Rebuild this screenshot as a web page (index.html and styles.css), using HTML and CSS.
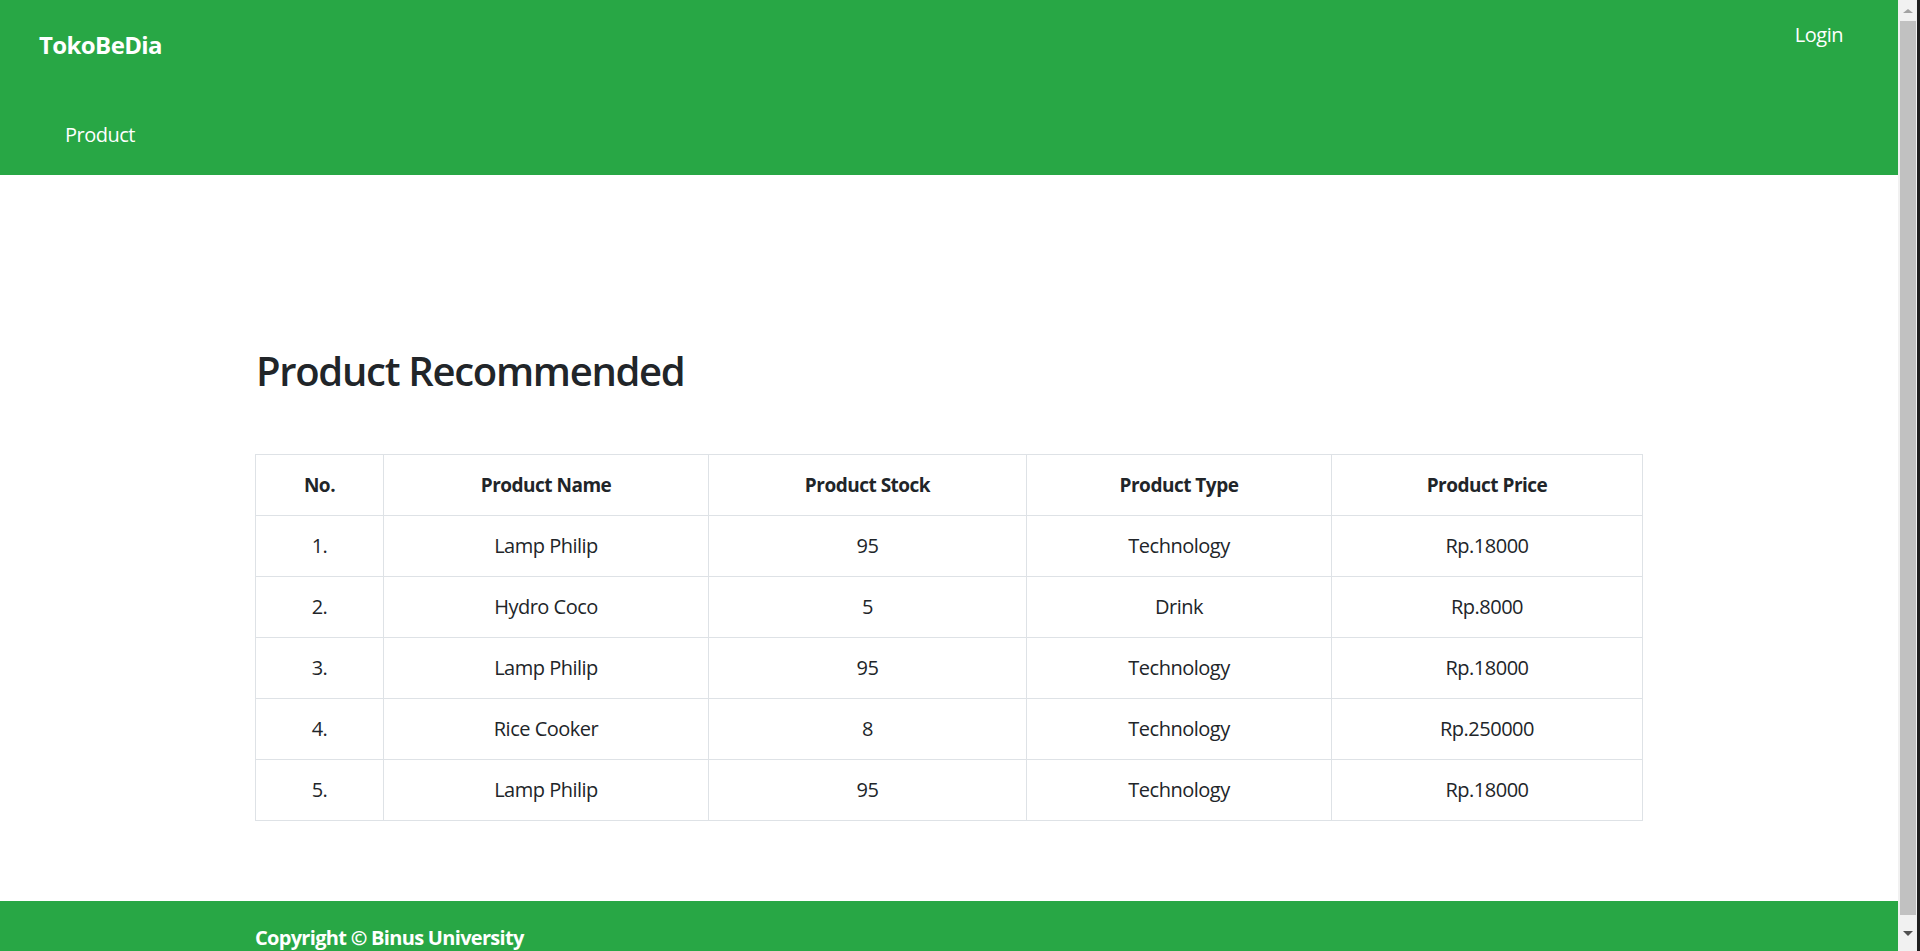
FILE: index.html
```html
<!DOCTYPE html>
<html lang="en">
<head>
<meta charset="utf-8">
<title>TokoBeDia</title>
<link rel="stylesheet" href="styles.css">
</head>
<body>
<div class="window">
  <div class="page">
    <header class="site-header">
      <div class="topbar">
        <a class="brand" href="#">TokoBeDia</a>
        <a class="login" href="#">Login</a>
      </div>
      <nav class="nav">
        <a class="nav-link" href="#">Product</a>
      </nav>
    </header>
    <main class="main">
      <div class="container">
        <h1 class="title">Product Recommended</h1>
        <table class="products">
          <colgroup>
            <col class="c-no"><col class="c-name"><col class="c-stock"><col class="c-type"><col class="c-price">
          </colgroup>
          <thead>
            <tr><th>No.</th><th>Product Name</th><th>Product Stock</th><th>Product Type</th><th>Product Price</th></tr>
          </thead>
          <tbody>
            <tr><td>1.</td><td>Lamp Philip</td><td>95</td><td>Technology</td><td>Rp.18000</td></tr>
            <tr><td>2.</td><td>Hydro Coco</td><td>5</td><td>Drink</td><td>Rp.8000</td></tr>
            <tr><td>3.</td><td>Lamp Philip</td><td>95</td><td>Technology</td><td>Rp.18000</td></tr>
            <tr><td>4.</td><td>Rice Cooker</td><td>8</td><td>Technology</td><td>Rp.250000</td></tr>
            <tr><td>5.</td><td>Lamp Philip</td><td>95</td><td>Technology</td><td>Rp.18000</td></tr>
          </tbody>
        </table>
      </div>
    </main>
    <footer class="site-footer">
      <div class="container">
        <p class="copyright">Copyright © Binus University</p>
      </div>
    </footer>
  </div>
  <div class="scrollbar" aria-hidden="true">
    <div class="sb-arrow sb-up"></div>
    <div class="sb-thumb"></div>
    <div class="sb-arrow sb-down"></div>
  </div>
</div>
</body>
</html>
```
FILE: styles.css
```css
* { box-sizing: border-box; }
html, body { margin: 0; padding: 0; }
body {
  font-family: "Open Sans", "Noto Sans", sans-serif;
  color: #212529;
  background: #fff;
  overflow: hidden;
}
a { text-decoration: none; color: #fff; }

.window {
  display: flex;
  height: 951px;
  overflow: hidden;
}
.page {
  flex: 1;
  min-width: 0;
  display: flex;
  flex-direction: column;
}

.site-header {
  background: #28a745;
  height: 175px;
  flex: none;
}
.topbar {
  display: flex;
  justify-content: space-between;
  align-items: flex-start;
  padding: 20px 55px 0 39px;
}
.brand {
  font-size: 24px;
  font-weight: 700;
  line-height: 36px;
  margin-top: 7px;
  letter-spacing: -0.6px;
}
.login {
  font-size: 20px;
  line-height: 30px;
  letter-spacing: -0.5px;
}
.nav {
  display: flex;
  padding: 57px 0 0 65px;
}
.nav-link {
  font-size: 20px;
  line-height: 30px;
  letter-spacing: -0.5px;
}

.main {
  padding: 172px 0 80px;
  flex: none;
}
.container {
  width: 1388px;
  padding-right: 1px;
  margin: 0 auto;
}
.title {
  margin: 0 0 59px;
  font-size: 40px;
  line-height: 48px;
  font-weight: 600;
  letter-spacing: -1.3px;
  padding-left: 1px;
}

.products {
  width: 1387px;
  border-collapse: collapse;
  table-layout: fixed;
  font-size: 20px;
}
.c-no { width: 128px; }
.c-name { width: 325px; }
.c-stock { width: 318px; }
.c-type { width: 305px; }
.c-price { width: 311px; }
.products th, .products td {
  border: 1px solid #dee2e6;
  padding: 15px 12px;
  line-height: 30px;
  text-align: center;
  vertical-align: middle;
  letter-spacing: -0.5px;
}
.products th { font-weight: 700; font-size: 19px; }
.products td { font-weight: 400; }

.site-footer {
  background: #28a745;
  flex: none;
  padding: 22px 0 40px;
}
.copyright {
  margin: 0;
  color: #fff;
  font-size: 20px;
  line-height: 30px;
  font-weight: 700;
  letter-spacing: -0.7px;
}

.scrollbar {
  flex: none;
  width: 22px;
  height: 951px;
  background: #f1f1f1;
  border-right: 3px solid #1f1f1f;
  display: flex;
  flex-direction: column;
  align-items: stretch;
}
.sb-arrow {
  height: 21px;
  flex: none;
  display: flex;
  align-items: center;
  justify-content: center;
}
.sb-up::before {
  content: "";
  border-left: 5px solid transparent;
  border-right: 5px solid transparent;
  border-bottom: 4px solid #a3a3a3;
}
.sb-down { height: 36px; }
.sb-down::before {
  content: "";
  border-left: 5px solid transparent;
  border-right: 5px solid transparent;
  border-top: 5px solid #505050;
}
.sb-thumb {
  flex: 1;
  background: #c1c1c1;
  margin: 0 1px 0 2px;
}
```
